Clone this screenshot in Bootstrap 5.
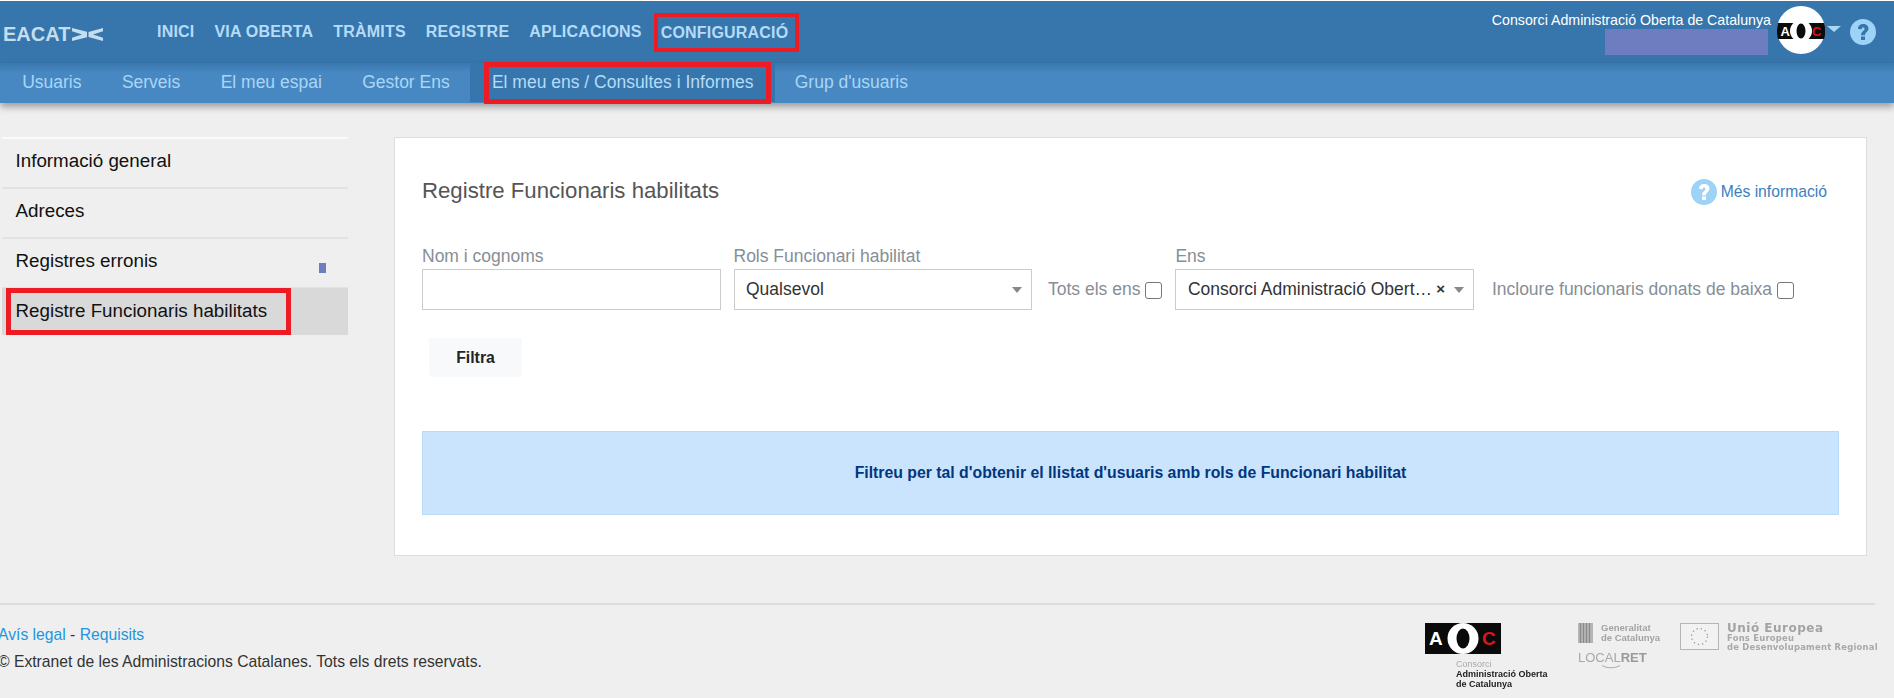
<!DOCTYPE html>
<html lang="ca">
<head>
<meta charset="utf-8">
<title>Registre Funcionaris habilitats</title>
<link href="https://cdn.jsdelivr.net/npm/bootstrap@5.3.0/dist/css/bootstrap.min.css" rel="stylesheet">
<style>
html,body{height:698px;overflow:hidden}
body{background:#efefef;font-family:"Liberation Sans",Arial,sans-serif;color:#212529;font-size:16px}
.topbar{background:#3776ac;height:63px;border-top:1px solid #fff;position:relative;z-index:2;padding:0}
.brand{width:147px;padding-left:3px;color:#c4deef;font-weight:700;font-size:20px;padding-top:4px}
.brand svg{margin-left:2px}
.mainnav .nav-link{color:#b4dcf8;font-weight:700;font-size:16px;letter-spacing:.2px;padding:0 10px;line-height:20px}
.mainnav .redmark{border:4px solid #ed1c24;padding:6px 7px 5px 3px;margin-left:2px;color:#b4dcf8}
.usertext{color:#fff;font-size:14.2px;line-height:18px;width:284px;margin-top:1px;margin-right:6px;text-align:right}
.maskbox{display:block;width:163px;height:26px;background:#6e7dc0;margin:0 3px 0 auto}
.avatar{width:48px;height:48px;margin-top:-4px}
.caretmark{width:0;height:0;border-left:7px solid transparent;border-right:7px solid transparent;border-top:6px solid #a8d8f8;margin:-6px 3px 0 2px}
.helpic{margin:-1px 18px 0 6px}
.subbar{background:linear-gradient(#3a78ae,#4788c3 25%,#4788c3);height:40px;box-shadow:0 4px 7px rgba(0,0,0,.35);padding-left:2px;position:relative;z-index:3}
.subbar .nav-link{color:#a9d6f6;font-size:17.5px;padding:0 20.2px;line-height:38px;height:39px}
.subbar .tabcell{background:#3776ac;padding:0 4px 0 14px;height:39px}
.subbar .tabcell .nav-link.active{background:transparent;color:#b4dcf8;border:5px solid #ed1c24;padding:0 12px 0 3px;margin-top:-1px;height:42px;line-height:31px}
.pagebody{padding:34px 27px 0 2px;gap:46px;height:500px}
.sidemenu{width:346px}
.sidemenu .list-group-item{background:transparent;border:0;border-top:2px solid #e2e2e2;border-radius:0;height:50px;padding:0 13.5px 4px;color:#111;font-size:18.8px;display:flex;align-items:center;justify-content:space-between;margin:0}
.sidemenu .list-group-item.first{border-top-color:#fafafa}
.sidemenu .list-group-item.active-row{background:#d9d9d9;height:48px;padding:0;border-top:1px solid #e2e2e2;z-index:0}
.active-label{border:5px solid #ed1c24;height:47px;width:285px;margin-left:4px;padding-left:4.5px;line-height:36px;display:block;white-space:nowrap}
.tinymark{display:block;width:7px;height:10px;background:#6e7dc0;margin-right:9px;margin-top:14px}
.maincard{width:1473px;height:419px;border:1px solid #ddd;border-radius:0;padding:27px;background:#fff}
.cardtitle{font-size:22.2px;font-weight:400;color:#555;margin:-1px 0 0;line-height:54px;height:54px}
.moreinfo{color:#3c80bd;font-size:15.7px;text-decoration:none;margin-right:12px}
.fieldrow{margin-top:27px;gap:13px}
.fieldbox{width:298.5px}
.fieldlabel{display:block;color:#868e96;font-size:17.5px;line-height:22px;margin:0 0 2px;white-space:nowrap}
.flatinput{height:41px;border:1px solid #ccc;border-radius:0;font-size:17.5px;color:#333;padding:0 9px 0 11.5px;background:#fff}
.flatinput .txt{flex:1;min-width:0}
.trimark{width:0;height:0;border-left:5px solid transparent;border-right:5px solid transparent;border-top:6px solid #888;flex:none}
.clearx{font-weight:700;font-size:15px;color:#333;margin:0 9px 0 4px}
.checkline{color:#868e96;font-size:17.5px;height:41px;gap:5px}
.checkline .form-check-input{width:17px;height:17px;margin:2px 0 0;border:1px solid #767676;border-radius:3px;flex:none}
.offsetcheck{margin-left:3px}
.offsetcheck2{margin-left:5px}
.filterbtn{background:#f8f9fa;border:0;border-radius:2px;color:#212529;font-weight:700;font-size:15.8px;width:93px;height:39px;margin:28px 0 0 7px;padding:0}
.infobox{background:#cbe4fd;border:1px solid #b9daf8;border-radius:0;color:#00377f;font-weight:700;font-size:15.8px;height:84px;margin:54px 0 0;padding:0;display:flex;align-items:center;justify-content:center}
.footline{border-top:2px solid #dcdcdc;margin:0 19px 0 0;padding-top:19px;height:95px}
.footleft{font-size:15.7px;line-height:22px;margin-left:-2px;color:#333}
.footleft a{color:#2196dd;text-decoration:none}
.footsep{margin-bottom:5px}
.logozone{width:450px;height:75px;flex:none;filter:blur(.45px);margin-top:-1px}
.aoctext{font-size:9px;line-height:10px;font-weight:700;color:#222;margin:5px 0 0 31px;white-space:nowrap}
.aoctext span{color:#aaa;font-weight:400;display:block}
.ltext{font-size:9.5px;line-height:10px;font-weight:700;color:#a3a3a3;white-space:nowrap}
.eutitle{font-size:12px;line-height:11px;font-weight:700;color:#a3a3a3;letter-spacing:.5px;font-family:"DejaVu Sans",sans-serif}
.eusub{font-size:8.4px;line-height:8.5px;font-weight:700;color:#a8a8a8;letter-spacing:.25px;font-family:"DejaVu Sans",sans-serif;white-space:nowrap}
.localret{font-size:13px;color:#a9a9a9;line-height:14px;width:66px}
.localret b{color:#999}
.logoaoc{width:76px}
.col-aoc{width:153px;flex:none}
.col-gen{width:102px;flex:none}
.euflag{flex:none}
</style>
</head>
<body class="m-0">
<nav class="navbar topbar d-flex flex-nowrap align-items-center">
  <div class="brand d-flex align-items-center">EACAT<svg width="31" height="15" viewBox="0 0 31 15" aria-hidden="true"><path d="M0 1 L15 4.800 L15 10.200 L0 14 L0 10.800 L10 7.500 L0 4.200 Z M31 1 L16.500 5 L16.500 10 L31 14 L31 10.800 L21 7.500 L31 4.200 Z" fill="#c4deef"/></svg></div>
  <ul class="nav mainnav align-items-center">
    <li class="nav-item"><a class="nav-link" href="#">INICI</a></li>
    <li class="nav-item"><a class="nav-link" href="#">VIA OBERTA</a></li>
    <li class="nav-item"><a class="nav-link" href="#">TRÀMITS</a></li>
    <li class="nav-item"><a class="nav-link" href="#">REGISTRE</a></li>
    <li class="nav-item"><a class="nav-link" href="#">APLICACIONS</a></li>
    <li class="nav-item"><a class="nav-link redmark" href="#">CONFIGURACIÓ</a></li>
  </ul>
  <div class="ms-auto d-flex align-items-center">
    <div class="usertext text-nowrap">Consorci Administració Oberta de Catalunya<span class="maskbox"></span></div>
    <svg class="avatar" viewBox="0 0 48 48" aria-hidden="true"><circle cx="24" cy="24" r="24" fill="#fff"/><path d="M0 24a24 24 0 0 1 1-7h46a24 24 0 0 1 0 16H1a24 24 0 0 1-1-9z" fill="#0c0c0c"/><circle cx="24" cy="25" r="11" fill="#fff"/><ellipse cx="24" cy="25" rx="4.500" ry="7.500" fill="#0c0c0c"/><text x="3.500" y="30" font-family="Liberation Sans" font-weight="700" font-size="13" fill="#fff">A</text><text x="35" y="30" font-family="Liberation Sans" font-weight="700" font-size="13" fill="#d8161b">C</text></svg>
    <span class="caretmark"></span>
    <svg class="helpic" width="26" height="26" viewBox="0 0 26 26" aria-hidden="true"><circle cx="13" cy="13" r="13" fill="#9dd3f7"/><path d="M8 10 C8 6.800 10.300 5 13.200 5 C16.300 5 18.500 6.900 18.500 9.600 C18.500 13 15 13.300 15 16.300 L11 16.300 C11 12 14.500 12 14.500 9.900 C14.500 9.100 14 8.500 13.100 8.500 C12.200 8.500 11.700 9.200 11.700 10.200 Z" fill="#3776ac"/><rect x="11" y="17.500" width="4" height="3.500" fill="#3776ac"/></svg>
  </div>
</nav>
<nav class="subbar">
  <ul class="nav flex-nowrap">
    <li class="nav-item"><a class="nav-link" href="#">Usuaris</a></li>
    <li class="nav-item"><a class="nav-link" href="#">Serveis</a></li>
    <li class="nav-item"><a class="nav-link" href="#">El meu espai</a></li>
    <li class="nav-item"><a class="nav-link" href="#">Gestor Ens</a></li>
    <li class="nav-item tabcell"><a class="nav-link active" href="#">El meu ens / Consultes i Informes</a></li>
    <li class="nav-item"><a class="nav-link" href="#">Grup d'usuaris</a></li>
  </ul>
</nav>
<main class="d-flex pagebody">
  <aside class="sidemenu">
    <div class="list-group">
      <a class="list-group-item first" href="#">Informació general</a>
      <a class="list-group-item" href="#">Adreces</a>
      <a class="list-group-item" href="#"><span>Registres erronis</span><span class="tinymark"></span></a>
      <a class="list-group-item active-row" href="#"><span class="active-label">Registre Funcionaris habilitats</span></a>
    </div>
  </aside>
  <section class="card maincard">
    <div class="d-flex justify-content-between align-items-center">
      <h2 class="cardtitle">Registre Funcionaris habilitats</h2>
      <a class="moreinfo d-flex align-items-center gap-1" href="#"><svg width="26" height="26" viewBox="0 0 26 26" aria-hidden="true"><circle cx="13" cy="13" r="13" fill="#9dd3f7"/><path d="M8 10 C8 6.800 10.300 5 13.200 5 C16.300 5 18.500 6.900 18.500 9.600 C18.500 13 15 13.300 15 16.300 L11 16.300 C11 12 14.500 12 14.500 9.900 C14.500 9.100 14 8.500 13.100 8.500 C12.200 8.500 11.700 9.200 11.700 10.200 Z" fill="#fff"/><rect x="11" y="17.500" width="4" height="3.500" fill="#fff"/></svg>Més informació</a>
    </div>
    <form class="d-flex align-items-end fieldrow">
      <div class="fieldbox">
        <label class="fieldlabel">Nom i cognoms</label>
        <input class="form-control flatinput" type="text">
      </div>
      <div class="fieldbox">
        <label class="fieldlabel">Rols Funcionari habilitat</label>
        <div class="d-flex align-items-center flatinput"><span class="txt">Qualsevol</span><span class="trimark"></span></div>
      </div>
      <div class="d-flex align-items-center checkline text-nowrap offsetcheck">Tots els ens<input class="form-check-input" type="checkbox"></div>
      <div class="fieldbox">
        <label class="fieldlabel">Ens</label>
        <div class="d-flex align-items-center flatinput"><span class="txt text-truncate">Consorci Administració Oberta de Catalunya</span><span class="clearx">×</span><span class="trimark"></span></div>
      </div>
      <div class="d-flex align-items-center checkline text-nowrap offsetcheck2">Incloure funcionaris donats de baixa<input class="form-check-input" type="checkbox"></div>
    </form>
    <div><button class="btn filterbtn" type="button">Filtra</button></div>
    <div class="alert infobox" role="alert">Filtreu per tal d'obtenir el llistat d'usuaris amb rols de Funcionari habilitat</div>
  </section>
</main>
<footer class="d-flex justify-content-between footline">
  <div class="footleft">
    <div class="footsep"><a href="#">Avís legal</a> - <a href="#">Requisits</a></div>
    <div>© Extranet de les Administracions Catalanes. Tots els drets reservats.</div>
  </div>
  <div class="d-flex logozone">
    <div class="col-aoc">
      <svg class="logoaoc d-block" height="31" viewBox="0 0 76 31" aria-hidden="true"><rect width="76" height="31" fill="#0a0a0a"/><circle cx="38" cy="15.500" r="15.500" fill="#fff"/><ellipse cx="38" cy="15.500" rx="6.500" ry="10" fill="#0a0a0a"/><text x="4" y="22" font-family="Liberation Sans" font-weight="700" font-size="19" fill="#fff">A</text><text x="57" y="22" font-family="Liberation Sans" font-weight="700" font-size="19" fill="#d8161b">C</text></svg>
      <div class="aoctext"><span>Consorci</span>Administració Oberta<br>de Catalunya</div>
    </div>
    <div class="col-gen">
      <div class="d-flex gap-2 ltext"><svg width="15" height="20" viewBox="0 0 15 20" aria-hidden="true"><path d="M0 0h15v20H0z" fill="#b5b5b5"/><path d="M2.500 0v20M5.500 0v20M8.500 0v20M11.500 0v20" stroke="#8a8a8a" stroke-width="1.200"/></svg><span>Generalitat<br>de Catalunya</span></div>
      <div class="localret mt-2">LOCAL<b>RET</b><svg class="d-block mx-auto" width="20" height="4" viewBox="0 0 20 4" aria-hidden="true"><path d="M1 0.500 C6 3.500 14 3.500 19 0.500" fill="none" stroke="#aaa"/></svg></div>
    </div>
    <div class="d-flex gap-2">
      <svg class="euflag" width="39" height="27" viewBox="0 0 39 27" aria-hidden="true"><rect x=".5" y=".5" width="38" height="26" fill="#f2f2f2" stroke="#b5b5b5"/><circle cx="19.500" cy="13.500" r="8" fill="none" stroke="#999" stroke-width="1.300" stroke-dasharray="1.300 3"/></svg>
      <div><div class="eutitle">Unió Europea</div><div class="eusub">Fons Europeu<br>de Desenvolupament Regional</div></div>
    </div>
  </div>
</footer>
<script src="https://cdn.jsdelivr.net/npm/bootstrap@5.3.0/dist/js/bootstrap.bundle.min.js"></script>
</body>
</html>
